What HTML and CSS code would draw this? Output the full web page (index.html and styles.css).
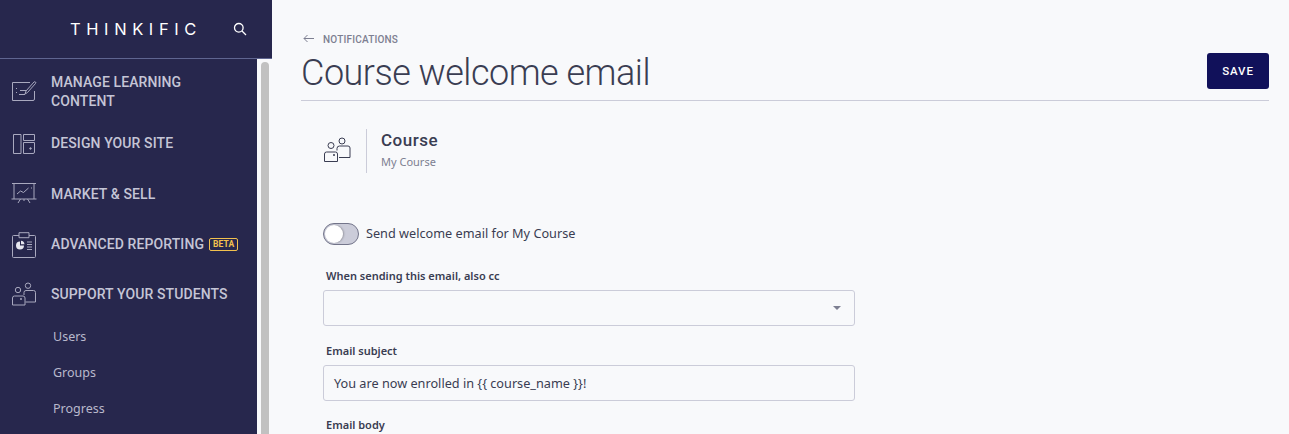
FILE: index.html
```html
<!DOCTYPE html>
<html lang="en">
  <head>
    <meta charset="UTF-8" />
    <title>Course welcome email</title>
    <link rel="stylesheet" href="styles.css">
  </head>
  <body>
    <div class="app">
      <aside class="sidebar">
        <div class="brand">
          <span class="logo">THINKIFIC</span>
          <svg class="search" width="14" height="14" viewBox="0 0 14 14" fill="none" stroke="#fff" stroke-width="1.3"><circle cx="5.8" cy="5.8" r="4.3"/><path d="M9 9l4 4"/></svg>
        </div>
        <div class="nav-wrap">
          <nav class="nav">
            <a class="nav-item tall">
              <svg class="nav-icon" width="26" height="24" viewBox="0 1 26 24" fill="none" stroke="#a9a9bf" stroke-width="1"><path d="M19 3.500H1.500v18h20.500a1.500 1.500 0 0 0 1.500-1.500v-8"/><path d="M5 9.500h1M5 13.500h1M9 11.500h6M8 15.500h6"/><path d="M14 15l1-3 8-9c1-1 2.500 .5 1.500 1.500l-8 9z"/></svg>
              <span>MANAGE LEARNING CONTENT</span>
            </a>
            <a class="nav-item">
              <svg class="nav-icon" width="26" height="24" viewBox="0 0 26 24" fill="none" stroke="#a9a9bf" stroke-width="1"><path d="M2.500 2.500h7.500v19H2.500zM12.500 2.500h11v6h-11zM12.500 10.500h11v9.500a1.500 1.500 0 0 1-1.500 1.500h-9.500z"/><circle cx="19.500" cy="16.500" r=".8" fill="#a9a9bf"/></svg>
              <span>DESIGN YOUR SITE</span>
            </a>
            <a class="nav-item">
              <svg class="nav-icon" width="26" height="24" viewBox="0 0 26 24" fill="none" stroke="#a9a9bf" stroke-width="1"><path d="M1 1.500h24M3 1.500V17M23 1.500V17M.5 17h25M9.500 17l-2.500 4M16.500 17l2.500 4M13 17v2"/><path d="M6 12l3.500-3 3 1.500 5-4.500"/><path d="M20 6h1"/></svg>
              <span>MARKET &amp; SELL</span>
            </a>
            <a class="nav-item">
              <svg class="nav-icon" width="26" height="26" viewBox="0 0 26 26" fill="none" stroke="#a9a9bf" stroke-width="1"><path d="M8 3.500H2.500a1 1 0 0 0-1 1v20a1 1 0 0 0 1 1h21a1 1 0 0 0 1-1v-20a1 1 0 0 0-1-1H18"/><path d="M8 .7h10v5H8z"/><path d="M9 9.500a4 4 0 1 0 4 4H9z" fill="#e6e6ee" stroke="none"/><path d="M10 8.700a4 4 0 0 1 3.500 3.500H10z" fill="#e6e6ee" stroke="none"/><path d="M16 10h5M16 12.500h5M16 15h5M16 17.500h5"/></svg>
              <span>ADVANCED REPORTING</span>
              <span class="beta">BETA</span>
            </a>
            <a class="nav-item last">
              <svg class="nav-icon" width="26" height="24" viewBox="0 0 26 24" fill="none" stroke="#a9a9bf" stroke-width="1"><circle cx="17" cy="3.700" r="2.700"/><circle cx="7" cy="8" r="2.700"/><path d="M13 13v-2.500a2 2 0 0 1 2-2h7.500a2 2 0 0 1 2 2v9.500h-10"/><path d="M1.500 16a2 2 0 0 1 2-2h8.500a2 2 0 0 1 2 2v7h-12.500z"/><circle cx="10" cy="17" r=".6" fill="#a9a9bf"/></svg>
              <span>SUPPORT YOUR STUDENTS</span>
            </a>
            <a class="sub-item">Users</a>
            <a class="sub-item">Groups</a>
            <a class="sub-item">Progress</a>
          </nav>
          <div class="scrollbar"><div class="thumb"></div></div>
        </div>
      </aside>

      <main class="content">
        <div class="crumb">
          <svg width="12" height="10" viewBox="0 0 12 10" fill="none" stroke="#7d7f91" stroke-width="1"><path d="M11 4.500H1M4.500 1L1 4.500 4.500 8"/></svg>
          <span>NOTIFICATIONS</span>
        </div>
        <div class="title-row">
          <h1>Course welcome email</h1>
          <button class="save">SAVE</button>
        </div>

        <div class="form">
          <div class="course">
            <div class="course-icon">
              <svg class="course-svg" width="28" height="26" viewBox="0 0 28 26" fill="none" stroke="#3a3d52" stroke-width="1"><circle cx="19" cy="4" r="3"/><circle cx="8" cy="8.500" r="3"/><path d="M14 13.500v-2a2.500 2.500 0 0 1 2.500-2.500h8.500a2 2 0 0 1 2 2v9.500H16"/><path d="M1.500 17a2 2 0 0 1 2-2h9a2 2 0 0 1 2 2v7.500h-13z"/><circle cx="11" cy="18" r=".6" fill="#3a3d52"/></svg>
            </div>
            <div class="course-text">
              <div class="course-label">Course</div>
              <div class="course-name">My Course</div>
            </div>
          </div>

          <label class="toggle-row">
            <span class="toggle"><span class="knob"></span></span>
            <span class="toggle-text">Send welcome email for My Course</span>
          </label>

          <div class="field-label first">When sending this email, also cc</div>
          <div class="input select"><span class="caret"></span></div>

          <div class="field-label">Email subject</div>
          <div class="input">You are now enrolled in {{ course_name }}!</div>

          <div class="field-label body-label">Email body</div>
        </div>
      </main>
    </div>
  </body>
</html>
```

FILE: styles.css
```css
html,
body {
  margin: 0;
  height: 100%;
  overflow: hidden;
}
body {
  background-color: #f8f9fb;
  color: #3a3d52;
  font-family: "Noto Sans", sans-serif;
}
.app {
  display: flex;
  height: 434px;
}

/* sidebar */
.sidebar {
  width: 272px;
  flex-shrink: 0;
  display: flex;
  flex-direction: column;
  background-color: #27274d;
}
.brand {
  height: 58px;
  flex-shrink: 0;
  display: flex;
  align-items: center;
  padding-left: 70px;
  border-bottom: 1px solid #5f6590;
}
.logo {
  width: 129px;
  font-family: Inter, sans-serif;
  font-size: 16.500px;
  font-weight: 400;
  letter-spacing: 5.600px;
  color: #fff;
  white-space: nowrap;
}
.search {
  margin-left: 34px;
}
.nav-wrap {
  flex: 1;
  display: flex;
  min-height: 0;
}
.nav {
  width: 257px;
  flex-shrink: 0;
  padding-top: 14px;
  box-sizing: border-box;
}
.nav-item {
  display: flex;
  align-items: center;
  height: 50.500px;
  padding-left: 11px;
  font-family: Roboto, sans-serif;
  font-size: 14px;
  font-weight: 500;
  letter-spacing: 0.1px;
  line-height: 19px;
  color: #c5c5d6;
}
.nav-item.tall {
  height: 38px;
  margin-bottom: 7.500px;
  padding-right: 50px;
}
.nav-item.last {
  height: 48.500px;
}
.nav-icon {
  width: 26px;
  flex-shrink: 0;
  margin-right: 14px;
}
.beta {
  margin-left: 5px;
  padding: 0 3px;
  border: 1px solid #f2c14e;
  border-radius: 2px;
  font-size: 8.500px;
  font-weight: 700;
  line-height: 11px;
  color: #f2c14e;
}
.sub-item {
  display: block;
  height: 36px;
  padding-left: 53px;
  font-size: 12.500px;
  line-height: 36px;
  color: #b9b9cc;
}
.scrollbar {
  flex: 1;
  background-color: #f8f9fb;
  padding: 3px 3px 0 4px;
}
.thumb {
  height: 100%;
  background-color: #c1c1c1;
  border-radius: 4px 4px 0 0;
}

/* main column */
.content {
  flex: 1;
  padding: 33px 20px 0 29px;
  min-width: 0;
}
.crumb {
  display: flex;
  align-items: center;
  gap: 8px;
  height: 12px;
  padding-left: 2px;
  font-family: Roboto, sans-serif;
  font-size: 10px;
  font-weight: 500;
  letter-spacing: 0.2px;
  color: #7d7f91;
}
.title-row {
  display: flex;
  align-items: flex-start;
  justify-content: space-between;
  height: 47px;
  padding-top: 8px;
  border-bottom: 1px solid #cbccd9;
}
h1 {
  margin: 0;
  font-family: Roboto, sans-serif;
  font-size: 36px;
  font-weight: 300;
  line-height: 40px;
  letter-spacing: -0.500px;
  color: #3a3d52;
}
.save {
  width: 62px;
  height: 36px;
  border: 0;
  border-radius: 3px;
  background-color: #11115a;
  color: #fff;
  font-family: Roboto, sans-serif;
  font-size: 11.500px;
  font-weight: 500;
  letter-spacing: 0.9px;
}

/* form */
.form {
  width: 532px;
  padding-left: 22px;
}
.course {
  display: flex;
  align-items: center;
  height: 44px;
  margin-top: 28px;
}
.course-icon {
  width: 43px;
  height: 44px;
  display: flex;
  align-items: center;
  border-right: 1px solid #cbccd9;
  margin-right: 14px;
}
.course-svg {
  margin-bottom: 3px;
}
.course-text {
  margin-top: -1px;
}
.course-label {
  font-family: Roboto, sans-serif;
  font-size: 17px;
  font-weight: 500;
  line-height: 21px;
  letter-spacing: 0.5px;
}
.course-name {
  font-size: 11px;
  line-height: 18px;
  margin-top: 2px;
  color: #7d7f91;
}
.toggle-row {
  display: flex;
  align-items: center;
  gap: 7px;
  margin-top: 50px;
  font-size: 12.700px;
}
.toggle-text {
  margin-bottom: 2px;
}
.toggle {
  width: 36px;
  height: 22px;
  box-sizing: border-box;
  border: 1px solid #73758a;
  border-radius: 11px;
  background-color: #cbccd9;
  display: flex;
  align-items: center;
  padding-left: 1px;
}
.knob {
  width: 18px;
  height: 18px;
  border-radius: 50%;
  background-color: #fff;
  box-shadow: 1px 0 2px rgba(0, 0, 0, 0.25);
}
.field-label {
  margin: 17px 0 7px 3px;
  font-size: 11px;
  font-weight: 600;
  line-height: 15px;
  color: #3a3d52;
}
.field-label.first {
  margin-top: 23px;
}
.field-label.body-label {
  margin-top: 16px;
}
.input {
  height: 36px;
  box-sizing: border-box;
  border: 1px solid #cbccd9;
  border-radius: 3px;
  padding-left: 10px;
  font-size: 12.700px;
  line-height: 34px;
  color: #3a3d52;
}
.select {
  display: flex;
  align-items: center;
  justify-content: flex-end;
  padding-right: 13px;
}
.caret {
  border-left: 4px solid transparent;
  border-right: 4px solid transparent;
  border-top: 4px solid #7d7f91;
}
```
